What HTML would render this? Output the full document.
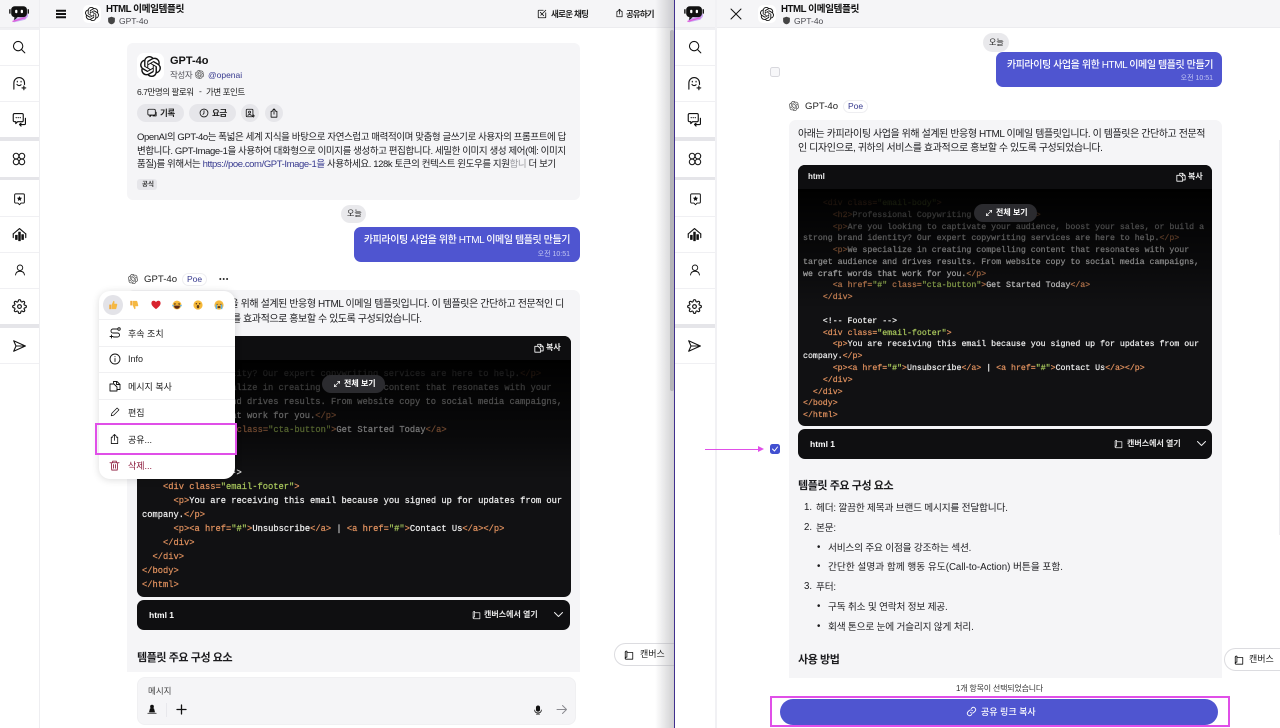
<!DOCTYPE html>
<html lang="ko"><head><meta charset="utf-8"><title>HTML 이메일 템플릿</title>
<style>
*{box-sizing:border-box}
html,body{margin:0;padding:0}
body{width:1280px;height:728px;overflow:hidden;position:relative;background:#fff;color:#111;font-family:"Liberation Sans","Noto Sans CJK KR",sans-serif;font-size:10px}
.a{position:absolute}
.t{position:absolute;white-space:nowrap;line-height:14px}
.m{letter-spacing:-.42px}
.d{letter-spacing:-.4px}
.h{letter-spacing:-.42px}
.k{letter-spacing:-.2px}
svg.i{position:absolute;fill:none;stroke:currentColor;stroke-width:1.8;stroke-linecap:round;stroke-linejoin:round;overflow:visible}
.sep{position:absolute;background:#f0f0f3}
pre{position:absolute;margin:0;font-family:"Liberation Mono",monospace;white-space:pre;color:#f0f0f0;-webkit-text-stroke:.2px currentColor}
pre b{font-weight:400;color:#e2925f}
pre u{text-decoration:none;color:#a8c75c}
.pill{position:absolute;background:#e9e9ec;border-radius:10px}
.btn{position:absolute;background:#e6e6ea;border-radius:9px;height:18px}
</style></head><body>
<svg width="0" height="0" style="position:absolute">
<defs>
<symbol id="oai" viewBox="0 0 24 24"><path fill="currentColor" d="M22.2819 9.8211a5.9847 5.9847 0 0 0-.5157-4.9108 6.0462 6.0462 0 0 0-6.5098-2.9A6.0651 6.0651 0 0 0 4.9807 4.1818a5.9847 5.9847 0 0 0-3.9977 2.9 6.0462 6.0462 0 0 0 .7427 7.0966 5.98 5.98 0 0 0 .511 4.9107 6.051 6.051 0 0 0 6.5146 2.9001A5.9847 5.9847 0 0 0 13.2599 24a6.0557 6.0557 0 0 0 5.7718-4.2058 5.9894 5.9894 0 0 0 3.9977-2.9001 6.0557 6.0557 0 0 0-.7475-7.0729zm-9.022 12.6081a4.4755 4.4755 0 0 1-2.8764-1.0408l.1419-.0804 4.7783-2.7582a.7948.7948 0 0 0 .3927-.6813v-6.7369l2.02 1.1686a.071.071 0 0 1 .038.052v5.5826a4.504 4.504 0 0 1-4.4945 4.4944zm-9.6607-4.1254a4.4708 4.4708 0 0 1-.5346-3.0137l.142.0852 4.783 2.7582a.7712.7712 0 0 0 .7806 0l5.8428-3.3685v2.3324a.0804.0804 0 0 1-.0332.0615L9.74 19.9502a4.4992 4.4992 0 0 1-6.1408-1.6464zM2.3408 7.8956a4.485 4.485 0 0 1 2.3655-1.9728V11.6a.7664.7664 0 0 0 .3879.6765l5.8144 3.3543-2.0201 1.1685a.0757.0757 0 0 1-.071 0l-4.8303-2.7865A4.504 4.504 0 0 1 2.3408 7.872zm16.5963 3.8558L13.1038 8.364 15.1192 7.2a.0757.0757 0 0 1 .071 0l4.8303 2.7913a4.4944 4.4944 0 0 1-.6765 8.1042v-5.6772a.79.79 0 0 0-.407-.667zm2.0107-3.0231l-.142-.0852-4.7735-2.7818a.7759.7759 0 0 0-.7854 0L9.409 9.2297V6.8974a.0662.0662 0 0 1 .0284-.0615l4.8303-2.7866a4.4992 4.4992 0 0 1 6.6802 4.66zM8.3065 12.863l-2.02-1.1638a.0804.0804 0 0 1-.038-.0567V6.0742a4.4992 4.4992 0 0 1 7.3757-3.4537l-.142.0805L8.704 5.459a.7948.7948 0 0 0-.3927.6813zm1.0976-2.3654l2.602-1.4998 2.6069 1.4998v2.9994l-2.5974 1.4997-2.6067-1.4997Z"/></symbol>
<symbol id="poe" viewBox="0 0 24 24"><path d="M5 17.500l15-5 2-3-.5 5-3 3.500-13 3z" fill="#c9a6f5"/><path d="M4 20l15-4.500" stroke="#e05ad8" stroke-width="1.400" fill="none"/><rect x="2.500" y="2.500" width="18" height="12.500" rx="4" fill="#111"/><path d="M1 6v5M22 6v5" stroke="#111" stroke-width="1.600"/><path d="M6 15v3.500l4-3.500z" fill="#111"/><rect x="7" y="6.500" width="2.600" height="4" rx="1.200" fill="#fff"/><rect x="13.400" y="6.500" width="2.600" height="4" rx="1.200" fill="#fff"/></symbol>
<symbol id="search" viewBox="0 0 24 24"><circle cx="10.500" cy="10.500" r="8"/><path d="M16.500 16.500L22 22"/></symbol>
<symbol id="botplus" viewBox="0 0 24 24"><path d="M3 21v-10a8.500 8.500 0 0 1 17 0v2.500"/><path d="M8 13.500c1 2.200 4.800 2.400 6.500.5"/><path d="M8.500 8.500v1M14.500 8.500v1"/><path d="M19 16v6M16 19h6"/></symbol>
<symbol id="chat" viewBox="0 0 24 24"><path d="M4 2.500h12a2 2 0 0 1 2 2v9a2 2 0 0 1-2 2H9l-3 3v-3H4a2 2 0 0 1-2-2v-9a2 2 0 0 1 2-2z"/><path d="M6.500 9h.5M9.700 9h.5M13 9h.5"/><path d="M21.500 10v8.500a1.500 1.500 0 0 1-1.500 1.500h-7M14.500 22.500L12 20l2.500-2"/></symbol>
<symbol id="grid" viewBox="0 0 24 24"><circle cx="7" cy="7" r="4.800"/><circle cx="17" cy="7" r="4.800"/><circle cx="7" cy="17" r="4.800"/><circle cx="17" cy="17" r="4.800"/></symbol>
<symbol id="star" viewBox="0 0 24 24"><path d="M5 2.500h14a2 2 0 0 1 2 2v13a2 2 0 0 1-2 2h-4l-3 3-3-3H5a2 2 0 0 1-2-2v-13a2 2 0 0 1 2-2z"/><path d="M12 6.500l1.500 3 3.300.4-2.400 2.300.6 3.300-3-1.600-3 1.600.6-3.300L7.200 9.900l3.300-.4z" fill="currentColor" stroke="none"/></symbol>
<symbol id="chart" viewBox="0 0 24 24"><path d="M2 11L12 2.500 22 11"/><path d="M2 11v6M22 11v6"/><path d="M5.500 13h3v7h-3zM10.500 8h3v14h-3zM15.500 12h3v8h-3z" fill="currentColor" stroke-width="1"/></symbol>
<symbol id="user" viewBox="0 0 24 24"><circle cx="12" cy="7.500" r="5.500"/><path d="M3 22c.6-5 4-7.500 9-7.500s8.400 2.500 9 7.500"/></symbol>
<symbol id="gear" viewBox="0 0 24 24"><path d="M12 15a3 3 0 1 0 0-6 3 3 0 0 0 0 6z"/><path d="M19.400 15a1.650 1.650 0 0 0 .33 1.820l.06.06a2 2 0 0 1 0 2.830 2 2 0 0 1-2.830 0l-.06-.06a1.650 1.650 0 0 0-1.820-.33 1.650 1.650 0 0 0-1 1.510V21a2 2 0 0 1-2 2 2 2 0 0 1-2-2v-.09A1.650 1.650 0 0 0 9 19.400a1.650 1.650 0 0 0-1.820.33l-.06.06a2 2 0 0 1-2.830 0 2 2 0 0 1 0-2.830l.06-.06a1.650 1.650 0 0 0 .33-1.820 1.650 1.650 0 0 0-1.510-1H3a2 2 0 0 1-2-2 2 2 0 0 1 2-2h.09A1.650 1.650 0 0 0 4.600 9a1.650 1.650 0 0 0-.33-1.820l-.06-.06a2 2 0 0 1 0-2.830 2 2 0 0 1 2.830 0l.06.06a1.650 1.650 0 0 0 1.820.33H9a1.650 1.650 0 0 0 1-1.510V3a2 2 0 0 1 2-2 2 2 0 0 1 2 2v.09a1.650 1.650 0 0 0 1 1.510 1.650 1.650 0 0 0 1.820-.33l.06-.06a2 2 0 0 1 2.830 0 2 2 0 0 1 0 2.830l-.06.06a1.650 1.650 0 0 0-.33 1.820V9a1.650 1.650 0 0 0 1.510 1H21a2 2 0 0 1 2 2 2 2 0 0 1-2 2h-.09a1.650 1.650 0 0 0-1.510 1z"/></symbol>
<symbol id="send" viewBox="0 0 24 24"><path d="M2 3l20 9-20 9 4-9z"/><path d="M6 12h16"/></symbol>
<symbol id="share" viewBox="0 0 24 24"><path d="M8 8H5v14h14V8h-3"/><path d="M12 15V2M8 6l4-4 4 4"/></symbol>
<symbol id="copy" viewBox="0 0 24 24"><path d="M9 6V3h7l6 6v10h-6"/><path d="M2 8h8l6 6v8H2z"/><path d="M15 3v6h7"/></symbol>
<symbol id="canvas" viewBox="0 0 24 24"><path d="M3 5v15c0 1.500 1 2 2 2h16V6H7"/><path d="M7 3v14c-2 0-4 1-4 3"/><path d="M3 5c0-2 2-3 4-2"/></symbol>
<symbol id="newchat" viewBox="0 0 24 24"><path d="M21 9v11a1 1 0 0 1-1 1H4a1 1 0 0 1-1-1V4a1 1 0 0 1 1-1h11"/><path d="M9 15l12-12M8 8l8 8"/></symbol>
<symbol id="shield" viewBox="0 0 24 24"><path d="M12 2l9 3v8c0 5-4 8-9 9-5-1-9-4-9-9V5z" fill="currentColor" stroke="none"/></symbol>
<symbol id="hist" viewBox="0 0 24 24"><rect x="2" y="3" width="18" height="14" rx="3"/><path d="M7 17v4l4-4"/><path d="M22 10v9h-8"/></symbol>
<symbol id="clock" viewBox="0 0 24 24"><circle cx="12" cy="12" r="9.500"/><path d="M12 6.500v6l-2.500 3"/></symbol>
<symbol id="addp" viewBox="0 0 24 24"><rect x="3" y="3" width="16" height="18" rx="2"/><circle cx="11" cy="10" r="2.500"/><path d="M7 18c.5-3 7-3 8 0"/><path d="M20 16v6M17 19h6"/></symbol>
<symbol id="follow" viewBox="0 0 24 24"><circle cx="20" cy="4" r="2.500"/><path d="M17.500 4H8a4 4 0 0 0 0 8h9a4 4 0 0 1 0 8H9"/><path d="M5 16v6M2 19h6"/></symbol>
<symbol id="info" viewBox="0 0 24 24"><circle cx="12" cy="12" r="10"/><path d="M12 11v6M12 7v.5"/></symbol>
<symbol id="pen" viewBox="0 0 24 24"><path d="M3 21l1.500-6L17 2.500l4.500 4.500L9 19.500z"/></symbol>
<symbol id="trash" viewBox="0 0 24 24"><path d="M2 6h20M8 6V2.500h8V6M5 6l1 16h12l1-16M10 10v8M14 10v8"/></symbol>
<symbol id="expand" viewBox="0 0 24 24"><path d="M4 20L20 4M13 4h7v7M11 20H4v-7"/></symbol>
<symbol id="mic" viewBox="0 0 24 24"><rect x="8" y="2" width="8" height="13" rx="4" fill="currentColor"/><path d="M4 12c0 5 3.500 7 8 7s8-2 8-7M12 19v3M8 22h8"/></symbol>
<symbol id="user2" viewBox="0 0 24 24"><circle cx="12" cy="5" r="3.500" fill="currentColor"/><path d="M8 10h8l2 8H6zM2 21h20" fill="currentColor"/></symbol>
<symbol id="link" viewBox="0 0 24 24"><path d="M10 14a5 5 0 0 0 7 0l3-3a5 5 0 0 0-7-7l-1.500 1.500"/><path d="M14 10a5 5 0 0 0-7 0l-3 3a5 5 0 0 0 7 7l1.500-1.500"/></symbol>
<symbol id="thumb" viewBox="0 0 24 24"><path d="M3 11h5v11H3z" fill="#f0a93c"/><path d="M9 11l4-9c2 0 3 1.500 2.500 3.500L15 9h5.500c1.500 0 2 1.500 1.500 3l-2 8c-.3 1.300-1 2-2.500 2H9z" fill="#f5b841"/></symbol>
<symbol id="wow" viewBox="0 0 24 24"><circle cx="12" cy="12" r="11" fill="#f6b93a"/><circle cx="8" cy="9" r="1.700" fill="#5b3a1a"/><circle cx="16" cy="9" r="1.700" fill="#5b3a1a"/><ellipse cx="12" cy="16" rx="3" ry="4" fill="#5b3a1a"/></symbol>
<symbol id="laugh" viewBox="0 0 24 24"><circle cx="12" cy="12" r="10.500" fill="#f6b93a"/><path d="M5 7.500l4 2-4 1.500M19 7.500l-4 2 4 1.500" fill="none" stroke="#5b3a1a" stroke-width="1.500"/><path d="M5 13.500h14c0 5-3 7.500-7 7.500s-7-2.500-7-7.500z" fill="#5b2a1a"/><path d="M1 11c-1 3 0 5 3 5l1-3zM23 11c1 3 0 5-3 5l-1-3z" fill="#5ab0e8"/></symbol>
<symbol id="cry" viewBox="0 0 24 24"><circle cx="12" cy="12" r="11" fill="#f6b93a"/><path d="M6 9.500c1.500 1 3 1 4 0M14 9.500c1 1 2.500 1 4 0" fill="none" stroke="#5b3a1a" stroke-width="1.500"/><ellipse cx="12" cy="17" rx="3.500" ry="2.500" fill="#5b3a1a"/><path d="M4 11h3.500v11H4zM16.500 11H20v11h-3.500z" fill="#5ab0e8"/></symbol>
</defs>
</svg>

<!-- LEFT PANEL -->
<div class="a" style="left:0;top:0;width:675px;height:728px;background:#fff;overflow:hidden">
  <div class="a" style="left:0;top:0;width:675px;height:28px;background:#f5f5f7;border-bottom:1px solid #ececef"></div>
  <div class="a" style="left:39px;top:0;width:1px;height:728px;background:#eeeef1"></div>
  <div class="sep" style="left:0;top:28px;width:39px;height:2px"></div>
  <div class="sep" style="left:0;top:65px;width:39px;height:1px"></div>
  <div class="sep" style="left:0;top:101px;width:39px;height:1px"></div>
  <div class="sep" style="left:0;top:137px;width:39px;height:4px;background:#e5e5e9"></div>
  <div class="sep" style="left:0;top:177px;width:39px;height:3px;background:#e5e5e9"></div>
  <div class="sep" style="left:0;top:216px;width:39px;height:1px"></div>
  <div class="sep" style="left:0;top:252px;width:39px;height:1px"></div>
  <div class="sep" style="left:0;top:288px;width:39px;height:1px"></div>
  <div class="sep" style="left:0;top:324px;width:39px;height:4px;background:#e5e5e9"></div>
  <div class="sep" style="left:0;top:363px;width:39px;height:1px"></div>
  <svg class="a" style="left:9px;top:4px" width="21" height="21"><use href="#poe"/></svg>
  <svg class="i" style="left:12px;top:40px" width="14" height="14"><use href="#search"/></svg>
  <svg class="i" style="left:12px;top:76px" width="15" height="15"><use href="#botplus"/></svg>
  <svg class="i" style="left:12px;top:112px" width="15" height="15"><use href="#chat"/></svg>
  <svg class="i" style="left:12px;top:152px" width="14" height="14"><use href="#grid"/></svg>
  <svg class="i" style="left:13px;top:192px" width="13" height="14"><use href="#star"/></svg>
  <svg class="i" style="left:12px;top:227px" width="15" height="15"><use href="#chart"/></svg>
  <svg class="i" style="left:14px;top:263px" width="12" height="14"><use href="#user"/></svg>
  <svg class="i" style="left:12px;top:299px" width="15" height="15"><use href="#gear"/></svg>
  <svg class="i" style="left:12px;top:339px" width="15" height="14"><use href="#send"/></svg>

  <svg class="i" style="left:56px;top:10px;stroke-width:2" width="10" height="8" viewBox="0 0 10 8" preserveAspectRatio="none"><path d="M0 .8h10M0 4h10M0 7.200h10" stroke-linecap="butt"/></svg>
  <div class="a" style="left:83px;top:5px;width:18px;height:18px;background:#fff;border-radius:5px"></div>
  <svg class="a" style="left:85px;top:7px" width="14" height="14"><use href="#oai"/></svg>
  <div class="t" style="left:106px;top:3px;font-size:9.700px;font-weight:700;letter-spacing:-.45px">HTML 이메일템플릿</div>
  <svg class="a" style="left:107px;top:16px;color:#444" width="9" height="9"><use href="#shield"/></svg>
  <div class="t" style="left:119px;top:14px;font-size:8.500px;color:#4a4a50">GPT-4o</div>
  <svg class="i" style="left:537px;top:9px;stroke-width:2" width="10" height="10"><use href="#newchat"/></svg>
  <div class="t" style="left:551px;top:7px;font-size:8.500px;font-weight:700;color:#222;letter-spacing:-.7px">새로운 채팅</div>
  <svg class="i" style="left:615px;top:8px;stroke-width:2" width="9" height="10"><use href="#share"/></svg>
  <div class="t" style="left:626px;top:7px;font-size:8.500px;font-weight:700;color:#222;letter-spacing:-.9px">공유하기</div>

  <!-- bot card -->
  <div class="a" style="left:127px;top:43px;width:453px;height:157px;background:#f5f5f7;border-radius:6px"></div>
  <div class="a" style="left:137px;top:53px;width:27px;height:27px;background:#fff;border-radius:7px"></div>
  <svg class="a" style="left:140px;top:56px" width="21" height="21"><use href="#oai"/></svg>
  <div class="t" style="left:170px;top:54px;font-size:11px;font-weight:700">GPT-4o</div>
  <div class="t" style="left:170px;top:68px;font-size:8.500px;color:#55555c;letter-spacing:-.4px">작성자</div>
  <svg class="a" style="left:195px;top:70px;color:#444" width="9" height="9"><use href="#oai"/></svg>
  <div class="t" style="left:208px;top:68px;font-size:8.500px;color:#373a8f">@openai</div>
  <div class="t" style="left:137px;top:85px;font-size:8.500px;color:#222;letter-spacing:-.45px">6.7만명의 팔로워</div>
  <div class="t" style="left:199px;top:84px;font-size:8.500px;color:#222">-</div>
  <div class="t" style="left:206px;top:85px;font-size:8.500px;color:#222;letter-spacing:-.45px">가변 포인트</div>
  <div class="btn" style="left:137px;top:104px;width:47px"></div>
  <svg class="i" style="left:147px;top:108px;stroke-width:2" width="10" height="10"><use href="#hist"/></svg>
  <div class="t" style="left:160px;top:106px;font-size:8.500px;font-weight:700;color:#222;letter-spacing:-.5px">기록</div>
  <div class="btn" style="left:189px;top:104px;width:47px"></div>
  <svg class="i" style="left:199px;top:108px;stroke-width:2" width="10" height="10"><use href="#clock"/></svg>
  <div class="t" style="left:212px;top:106px;font-size:8.500px;font-weight:700;color:#222;letter-spacing:-.5px">요금</div>
  <div class="btn" style="left:241px;top:104px;width:18px"></div>
  <svg class="i" style="left:245px;top:108px;stroke-width:2" width="10" height="10"><use href="#addp"/></svg>
  <div class="btn" style="left:265px;top:104px;width:18px"></div>
  <svg class="i" style="left:269px;top:108px;stroke-width:2" width="10" height="10"><use href="#share"/></svg>
  <div class="t d" style="left:137px;top:131px;font-size:9.500px;color:#1c1c1f">OpenAI의 GPT-4o는 폭넓은 세계 지식을 바탕으로 자연스럽고 매력적이며 맞춤형 글쓰기로 사용자의 프롬프트에 답</div>
  <div class="t d" style="left:137px;top:145px;font-size:9.500px;color:#1c1c1f">변합니다. GPT-Image-1을 사용하여 대화형으로 이미지를 생성하고 편집합니다. 세밀한 이미지 생성 제어(예: 이미지</div>
  <div class="t d" style="left:137px;top:158px;font-size:9.500px;color:#1c1c1f">품질)를 위해서는 <span style="color:#373a8f">https://poe.com/GPT-Image-1을</span> 사용하세요. 128k 토큰의 컨텍스트 윈도우를 지원<span style="color:#9a9a9f">합니</span> 더 보기</div>
  <div class="a" style="left:137px;top:179px;width:20px;height:11px;background:#e6e6ea;border-radius:3px"></div>
  <div class="t" style="left:142px;top:178px;font-size:6.500px;font-weight:700;color:#333">공식</div>

  <div class="pill" style="left:341px;top:205px;width:25px;height:18px"></div>
  <div class="t" style="left:347px;top:207px;font-size:8px;color:#222">오늘</div>
  <div class="a" style="left:354px;top:227px;width:226px;height:35px;background:#4f55d0;border-radius:7px"></div>
  <div class="t m" style="right:105px;top:234px;font-size:10px;font-weight:500;color:#fff">카피라이팅 사업을 위한 HTML 이메일 템플릿 만들기</div>
  <div class="t" style="right:105px;top:248px;font-size:7px;color:#c3c6f2">오전 10:51</div>

  <svg class="a" style="left:128px;top:274px;color:#444" width="10" height="10"><use href="#oai"/></svg>
  <div class="t" style="left:144px;top:273px;font-size:9.600px;color:#222">GPT-4o</div>
  <div class="a" style="left:182px;top:273px;width:25px;height:13px;background:#fff;border:1px solid #eeeef1;border-radius:7px"></div>
  <div class="t" style="left:187px;top:272px;font-size:8.500px;color:#373a8f">Poe</div>
  <svg class="a" style="left:219px;top:277px" width="10" height="4" viewBox="0 0 10 4"><circle cx="1.300" cy="2" r="1" fill="#222"/><circle cx="4.700" cy="2" r="1" fill="#222"/><circle cx="8.100" cy="2" r="1" fill="#222"/></svg>

  <!-- message card -->
  <div class="a" style="left:127px;top:290px;width:453px;height:382px;background:#f5f5f7;border-radius:7px 7px 0 0"></div>
  <div class="t m" style="left:137px;top:298px;font-size:10px;color:#1c1c1f">아래는 카피라이팅 사업을 위해 설계된 반응형 HTML 이메일 템플릿입니다. 이 템플릿은 간단하고 전문적인 디</div>
  <div class="t m" style="left:137px;top:313px;font-size:10px;color:#1c1c1f">자인으로, 귀하의 서비스를 효과적으로 홍보할 수 있도록 구성되었습니다.</div>
  <div class="a" style="left:137px;top:336px;width:434px;height:261px;background:#111113;border-radius:7px;overflow:hidden">
    <div class="a" style="left:0;top:0;width:434px;height:24px;background:#0e0e10"></div>
    <pre style="left:5px;top:31px;font-size:8.750px;line-height:14.100px">strong brand identity? Our expert copywriting services are here to help.<b>&lt;/p&gt;</b>
      <b>&lt;p&gt;</b>We specialize in creating compelling content that resonates with your
target audience and drives results. From website copy to social media campaigns,
we craft words that work for you.<b>&lt;/p&gt;</b>
      <b>&lt;a href=</b><u>"#"</u> <b>class=</b><u>"cta-button"</u><b>&gt;</b>Get Started Today<b>&lt;/a&gt;</b>
    <b>&lt;/div&gt;</b>

    &lt;!-- Footer --&gt;
    <b>&lt;div class=</b><u>"email-footer"</u><b>&gt;</b>
      <b>&lt;p&gt;</b>You are receiving this email because you signed up for updates from our
company.<b>&lt;/p&gt;</b>
      <b>&lt;p&gt;&lt;a href=</b><u>"#"</u><b>&gt;</b>Unsubscribe<b>&lt;/a&gt;</b> | <b>&lt;a href=</b><u>"#"</u><b>&gt;</b>Contact Us<b>&lt;/a&gt;&lt;/p&gt;</b>
    <b>&lt;/div&gt;</b>
  <b>&lt;/div&gt;</b>
<b>&lt;/body&gt;</b>
<b>&lt;/html&gt;</b></pre>
    <div class="a" style="left:0;top:24px;width:434px;height:120px;background:linear-gradient(to bottom,#000 0%,rgba(0,0,0,.75) 25%,rgba(0,0,0,.45) 65%,rgba(0,0,0,0) 100%)"></div>
  </div>
  <svg class="i" style="left:534px;top:343px;color:#fff;stroke-width:2" width="10" height="10"><use href="#copy"/></svg>
  <div class="t" style="left:546px;top:341px;font-size:8px;font-weight:700;color:#eee">복사</div>
  <div class="a" style="left:322px;top:375px;width:63px;height:18px;background:#2b2b2f;border-radius:9px"></div>
  <svg class="i" style="left:333px;top:380px;color:#fff;stroke-width:2" width="8" height="8"><use href="#expand"/></svg>
  <div class="t" style="left:344px;top:377px;font-size:8px;font-weight:700;color:#fff">전체 보기</div>

  <div class="a" style="left:137px;top:600px;width:433px;height:30px;background:#0f0f11;border-radius:7px"></div>
  <div class="t" style="left:149px;top:608px;font-size:8.500px;font-weight:700;color:#fff">html 1</div>
  <svg class="i" style="left:472px;top:610px;color:#eee;stroke-width:2" width="9" height="10"><use href="#canvas"/></svg>
  <div class="t" style="left:484px;top:608px;font-size:8px;font-weight:700;color:#e8e8e8">캔버스에서 열기</div>
  <svg class="i" style="left:554px;top:612px;color:#eee" width="9" height="5" viewBox="0 0 9 5"><path d="M.5.500l4 4 4-4" stroke-width="1"/></svg>
  <div class="t h" style="left:137px;top:651px;font-size:11px;font-weight:700;color:#1c1c1f">템플릿 주요 구성 요소</div>

  <!-- input -->
  <div class="a" style="left:137px;top:677px;width:439px;height:48px;background:#f5f5f7;border:1px solid #f0f0f2;border-radius:8px"></div>
  <div class="t" style="left:148px;top:684px;font-size:8.500px;color:#444">메시지</div>
  <svg class="i" style="left:147px;top:704px;stroke-width:2" width="10" height="11"><use href="#user2"/></svg>
  <div class="a" style="left:166px;top:703px;width:1px;height:14px;background:#e8e8ec"></div>
  <svg class="i" style="left:177px;top:705px;stroke-width:1.300" width="9" height="9" viewBox="0 0 9 9"><path d="M4.500 0v9M0 4.500h9"/></svg>
  <svg class="i" style="left:533px;top:704px;stroke-width:1.800" width="10" height="12"><use href="#mic"/></svg>
  <svg class="i" style="left:557px;top:705px;color:#8a8a90;stroke-width:1" width="10" height="9" viewBox="0 0 10 9"><path d="M0 4.500h9.500M5.500.5l4 4-4 4"/></svg>

  <div class="a" style="left:614px;top:643px;width:70px;height:23px;background:#fff;border:1px solid #dcdce0;border-radius:12px 0 0 12px"></div>
  <svg class="i" style="left:624px;top:650px;stroke-width:2" width="10" height="10"><use href="#canvas"/></svg>
  <div class="t" style="left:640px;top:647px;font-size:9px;color:#222">캔버스</div>

  <!-- shadow + scrollbar -->
  <div class="a" style="left:655px;top:0;width:19px;height:728px;background:linear-gradient(to right,rgba(150,150,155,0),rgba(150,150,155,.45))"></div>
  <div class="a" style="left:670px;top:30px;width:3.500px;height:361px;background:#b4b4b8;border-radius:2px"></div>

  <!-- popup -->
  <div class="a" style="left:99px;top:291px;width:136px;height:188px;background:#fff;border-radius:11px;box-shadow:0 1px 8px rgba(0,0,0,.14)"></div>
  <div class="a" style="left:103px;top:295px;width:20px;height:20px;background:#e3e3e8;border-radius:50%"></div>
  <svg class="a" style="left:108px;top:300px" width="10" height="10"><use href="#thumb"/></svg>
  <svg class="a" style="left:129px;top:300px;transform:rotate(180deg) scaleX(-1)" width="10" height="10"><use href="#thumb"/></svg>
  <svg class="a" style="left:151px;top:300px" width="10" height="10" viewBox="0 0 24 24"><path d="M12 22C4 16 1 12 1 7.500A5.800 5.800 0 0 1 12 5a5.800 5.800 0 0 1 11 2.500C23 12 20 16 12 22z" fill="#d8232f"/></svg>
  <svg class="a" style="left:172px;top:300px" width="10" height="10"><use href="#laugh"/></svg>
  <svg class="a" style="left:193px;top:300px" width="10" height="10"><use href="#wow"/></svg>
  <svg class="a" style="left:214px;top:300px" width="10" height="10"><use href="#cry"/></svg>
  <div class="a" style="left:99px;top:319px;width:136px;height:1px;background:#f0f0f2"></div>
  <div class="a" style="left:99px;top:346px;width:136px;height:1px;background:#f0f0f2"></div>
  <div class="a" style="left:99px;top:372px;width:136px;height:1px;background:#f0f0f2"></div>
  <div class="a" style="left:99px;top:399px;width:136px;height:1px;background:#f0f0f2"></div>
  <svg class="i" style="left:109px;top:327px;stroke-width:1.800" width="12" height="12"><use href="#follow"/></svg>
  <div class="t" style="left:128px;top:327px;font-size:9px;color:#222">후속 조치</div>
  <svg class="i" style="left:109px;top:353px;stroke-width:1.800" width="12" height="12"><use href="#info"/></svg>
  <div class="t" style="left:128px;top:352px;font-size:9px;color:#222">Info</div>
  <svg class="i" style="left:109px;top:380px;stroke-width:1.800" width="12" height="12"><use href="#copy"/></svg>
  <div class="t" style="left:128px;top:380px;font-size:9px;color:#222">메시지 복사</div>
  <svg class="i" style="left:110px;top:407px;stroke-width:1.800" width="10" height="10"><use href="#pen"/></svg>
  <div class="t" style="left:128px;top:406px;font-size:9px;color:#222">편집</div>
  <svg class="i" style="left:109px;top:433px;stroke-width:1.800" width="11" height="12"><use href="#share"/></svg>
  <div class="t" style="left:128px;top:433px;font-size:9px;color:#222">공유...</div>
  <svg class="i" style="left:109px;top:460px;color:#8a1538;stroke-width:1.800" width="11" height="11"><use href="#trash"/></svg>
  <div class="t" style="left:128px;top:459px;font-size:9px;color:#8a1538">삭제...</div>
  <div class="a" style="left:95px;top:423px;width:142px;height:32px;border:2px solid #e04fe8"></div>
</div>

<div class="a" style="left:674px;top:0;width:1.500px;height:728px;background:#40308e"></div>

<!-- RIGHT PANEL -->
<div class="a" style="left:675px;top:0;width:605px;height:728px;background:#fff;overflow:hidden">
  <div class="a" style="left:0;top:0;width:605px;height:28px;background:#f5f5f7;border-bottom:1px solid #ececef"></div>
  <div class="a" style="left:40px;top:0;width:2px;height:728px;background:#f1f1f4"></div>
  <div class="sep" style="left:0;top:28px;width:40px;height:2px"></div>
  <div class="sep" style="left:0;top:65px;width:40px;height:1px"></div>
  <div class="sep" style="left:0;top:101px;width:40px;height:1px"></div>
  <div class="sep" style="left:0;top:137px;width:40px;height:4px;background:#e5e5e9"></div>
  <div class="sep" style="left:0;top:177px;width:40px;height:3px;background:#e5e5e9"></div>
  <div class="sep" style="left:0;top:216px;width:40px;height:1px"></div>
  <div class="sep" style="left:0;top:252px;width:40px;height:1px"></div>
  <div class="sep" style="left:0;top:288px;width:40px;height:1px"></div>
  <div class="sep" style="left:0;top:324px;width:40px;height:4px;background:#e5e5e9"></div>
  <div class="sep" style="left:0;top:363px;width:40px;height:1px"></div>
  <svg class="a" style="left:9px;top:4px" width="21" height="21"><use href="#poe"/></svg>
  <svg class="i" style="left:13px;top:40px" width="14" height="14"><use href="#search"/></svg>
  <svg class="i" style="left:12px;top:76px" width="15" height="15"><use href="#botplus"/></svg>
  <svg class="i" style="left:12px;top:112px" width="15" height="15"><use href="#chat"/></svg>
  <svg class="i" style="left:13px;top:152px" width="14" height="14"><use href="#grid"/></svg>
  <svg class="i" style="left:14px;top:192px" width="13" height="14"><use href="#star"/></svg>
  <svg class="i" style="left:12px;top:227px" width="15" height="15"><use href="#chart"/></svg>
  <svg class="i" style="left:14px;top:263px" width="12" height="14"><use href="#user"/></svg>
  <svg class="i" style="left:12px;top:299px" width="15" height="15"><use href="#gear"/></svg>
  <svg class="i" style="left:12px;top:339px" width="15" height="14"><use href="#send"/></svg>

  <svg class="i" style="left:56px;top:9px;stroke-width:1" width="10" height="10" viewBox="0 0 10 10"><path d="M0 0l10 10M10 0L0 10"/></svg>
  <div class="a" style="left:83px;top:5px;width:18px;height:18px;background:#fff;border-radius:5px"></div>
  <svg class="a" style="left:85px;top:7px" width="14" height="14"><use href="#oai"/></svg>
  <div class="t" style="left:106px;top:3px;font-size:9.700px;font-weight:700;letter-spacing:-.45px">HTML 이메일템플릿</div>
  <svg class="a" style="left:107px;top:16px;color:#444" width="9" height="9"><use href="#shield"/></svg>
  <div class="t" style="left:119px;top:14px;font-size:8.500px;color:#4a4a50">GPT-4o</div>

  <div class="pill" style="left:308px;top:33px;width:26px;height:19px"></div>
  <div class="t" style="left:314px;top:36px;font-size:8px;color:#222">오늘</div>
  <div class="a" style="left:321px;top:52px;width:226px;height:35px;background:#4f55d0;border-radius:7px"></div>
  <div class="t m" style="right:67px;top:59px;font-size:10px;font-weight:500;color:#fff">카피라이팅 사업을 위한 HTML 이메일 템플릿 만들기</div>
  <div class="t" style="right:67px;top:72px;font-size:7px;color:#c3c6f2">오전 10:51</div>
  <div class="a" style="left:94.500px;top:66.500px;width:10px;height:10px;background:#f7f7f9;border:1px solid #d8d8dd;border-radius:2.500px"></div>

  <svg class="a" style="left:114px;top:101px;color:#444" width="10" height="10"><use href="#oai"/></svg>
  <div class="t" style="left:130px;top:100px;font-size:9.600px;color:#222">GPT-4o</div>
  <div class="a" style="left:168px;top:100px;width:25px;height:13px;background:#fff;border:1px solid #eeeef1;border-radius:7px"></div>
  <div class="t" style="left:173px;top:99px;font-size:8.500px;color:#373a8f">Poe</div>

  <div class="a" style="left:114px;top:120px;width:433px;height:558px;background:#f5f5f7;border-radius:7px 7px 0 0"></div>
  <div class="t m" style="left:123px;top:128px;font-size:10px;color:#1c1c1f">아래는 카피라이팅 사업을 위해 설계된 반응형 HTML 이메일 템플릿입니다. 이 템플릿은 간단하고 전문적</div>
  <div class="t m" style="left:123px;top:142px;font-size:10px;color:#1c1c1f">인 디자인으로, 귀하의 서비스를 효과적으로 홍보할 수 있도록 구성되었습니다.</div>

  <div class="a" style="left:123px;top:165px;width:414px;height:261px;background:#111113;border-radius:7px;overflow:hidden">
    <div class="a" style="left:0;top:0;width:414px;height:24px;background:#0e0e10"></div>
    <pre style="left:5px;top:33px;font-size:8.250px;line-height:11.780px">    <b>&lt;div class=</b><u>"email-body"</u><b>&gt;</b>
      <b>&lt;h2&gt;</b>Professional Copywriting Services<b>&lt;/h2&gt;</b>
      <b>&lt;p&gt;</b>Are you looking to captivate your audience, boost your sales, or build a
strong brand identity? Our expert copywriting services are here to help.<b>&lt;/p&gt;</b>
      <b>&lt;p&gt;</b>We specialize in creating compelling content that resonates with your
target audience and drives results. From website copy to social media campaigns,
we craft words that work for you.<b>&lt;/p&gt;</b>
      <b>&lt;a href=</b><u>"#"</u> <b>class=</b><u>"cta-button"</u><b>&gt;</b>Get Started Today<b>&lt;/a&gt;</b>
    <b>&lt;/div&gt;</b>

    &lt;!-- Footer --&gt;
    <b>&lt;div class=</b><u>"email-footer"</u><b>&gt;</b>
      <b>&lt;p&gt;</b>You are receiving this email because you signed up for updates from our
company.<b>&lt;/p&gt;</b>
      <b>&lt;p&gt;&lt;a href=</b><u>"#"</u><b>&gt;</b>Unsubscribe<b>&lt;/a&gt;</b> | <b>&lt;a href=</b><u>"#"</u><b>&gt;</b>Contact Us<b>&lt;/a&gt;&lt;/p&gt;</b>
    <b>&lt;/div&gt;</b>
  <b>&lt;/div&gt;</b>
<b>&lt;/body&gt;</b>
<b>&lt;/html&gt;</b></pre>
    <div class="a" style="left:0;top:24px;width:414px;height:120px;background:linear-gradient(to bottom,#000 0%,rgba(0,0,0,.75) 25%,rgba(0,0,0,.4) 65%,rgba(0,0,0,0) 100%)"></div>
  </div>
  <div class="t" style="left:133px;top:170px;font-size:8px;font-weight:700;color:#eee">html</div>
  <svg class="i" style="left:501px;top:172px;color:#fff;stroke-width:2" width="10" height="10"><use href="#copy"/></svg>
  <div class="t" style="left:513px;top:170px;font-size:8px;font-weight:700;color:#eee">복사</div>
  <div class="a" style="left:299px;top:204px;width:63px;height:18px;background:#2b2b2f;border-radius:9px"></div>
  <svg class="i" style="left:310px;top:209px;color:#fff;stroke-width:2" width="8" height="8"><use href="#expand"/></svg>
  <div class="t" style="left:321px;top:206px;font-size:8px;font-weight:700;color:#fff">전체 보기</div>

  <div class="a" style="left:123px;top:429px;width:414px;height:30px;background:#0f0f11;border-radius:7px"></div>
  <div class="t" style="left:135px;top:437px;font-size:8.500px;font-weight:700;color:#fff">html 1</div>
  <svg class="i" style="left:439px;top:439px;color:#eee;stroke-width:2" width="9" height="10"><use href="#canvas"/></svg>
  <div class="t" style="left:452px;top:437px;font-size:8px;font-weight:700;color:#e8e8e8">캔버스에서 열기</div>
  <svg class="i" style="left:522px;top:441px;color:#eee" width="9" height="5" viewBox="0 0 9 5"><path d="M.5.500l4 4 4-4" stroke-width="1"/></svg>

  <div class="t h" style="left:123px;top:479px;font-size:11px;font-weight:700;color:#1c1c1f">템플릿 주요 구성 요소</div>
  <div class="t" style="left:129px;top:501px;font-size:9.700px;color:#1c1c1f">1.</div>
  <div class="t k" style="left:141px;top:502px;font-size:9.700px;color:#1c1c1f">헤더: 깔끔한 제목과 브랜드 메시지를 전달합니다.</div>
  <div class="t" style="left:129px;top:521px;font-size:9.700px;color:#1c1c1f">2.</div>
  <div class="t k" style="left:141px;top:522px;font-size:9.700px;color:#1c1c1f">본문:</div>
  <div class="t" style="left:142px;top:541px;font-size:9.700px;color:#1c1c1f">•</div>
  <div class="t k" style="left:153px;top:542px;font-size:9.700px;color:#1c1c1f">서비스의 주요 이점을 강조하는 섹션.</div>
  <div class="t" style="left:142px;top:560px;font-size:9.700px;color:#1c1c1f">•</div>
  <div class="t" style="left:153px;top:561px;font-size:9.700px;color:#1c1c1f">간단한 설명과 함께 행동 유도(Call-to-Action) 버튼을 포함.</div>
  <div class="t" style="left:129px;top:580px;font-size:9.700px;color:#1c1c1f">3.</div>
  <div class="t k" style="left:141px;top:581px;font-size:9.700px;color:#1c1c1f">푸터:</div>
  <div class="t" style="left:142px;top:600px;font-size:9.700px;color:#1c1c1f">•</div>
  <div class="t k" style="left:153px;top:601px;font-size:9.700px;color:#1c1c1f">구독 취소 및 연락처 정보 제공.</div>
  <div class="t" style="left:142px;top:620px;font-size:9.700px;color:#1c1c1f">•</div>
  <div class="t k" style="left:153px;top:621px;font-size:9.700px;color:#1c1c1f">회색 톤으로 눈에 거슬리지 않게 처리.</div>
  <div class="t h" style="left:123px;top:653px;font-size:11px;font-weight:700;color:#1c1c1f">사용 방법</div>

  <div class="a" style="left:95px;top:678px;width:510px;height:50px;background:#fff"></div>
  <div class="t" style="left:281px;top:682px;font-size:8px;color:#333;letter-spacing:-.2px">1개 항목이 선택되었습니다</div>
  <div class="a" style="left:105px;top:699px;width:438px;height:26px;background:#4f55d0;border-radius:13px"></div>
  <svg class="i" style="left:291px;top:706px;color:#fff;stroke-width:2" width="11" height="11"><use href="#link"/></svg>
  <div class="t" style="left:306px;top:705px;font-size:9px;font-weight:500;color:#fff">공유 링크 복사</div>
  <div class="a" style="left:95px;top:696px;width:460px;height:31px;border:2px solid #e04fe8"></div>

  <div class="a" style="left:549px;top:648px;width:70px;height:23px;background:#fff;border:1px solid #dcdce0;border-radius:12px 0 0 12px"></div>
  <div class="a" style="left:604px;top:140px;width:1px;height:395px;background:#ececef"></div>
  <svg class="i" style="left:559px;top:655px;stroke-width:2" width="10" height="10"><use href="#canvas"/></svg>
  <div class="t" style="left:574px;top:652px;font-size:9px;color:#222">캔버스</div>

  <div class="a" style="left:95px;top:444px;width:10px;height:10px;background:#4150d0;border-radius:2.500px"></div>
  <svg class="i" style="left:97px;top:446px;color:#fff;stroke-width:1" width="6" height="6" viewBox="0 0 6 6"><path d="M.5 3l2 2 3-4"/></svg>
  <div class="a" style="left:30px;top:448.500px;width:55px;height:1.500px;background:#e04fe8"></div>
  <div class="a" style="left:83px;top:446px;width:0;height:0;border-left:6px solid #e04fe8;border-top:3.500px solid transparent;border-bottom:3.500px solid transparent"></div>
</div>
</body></html>
